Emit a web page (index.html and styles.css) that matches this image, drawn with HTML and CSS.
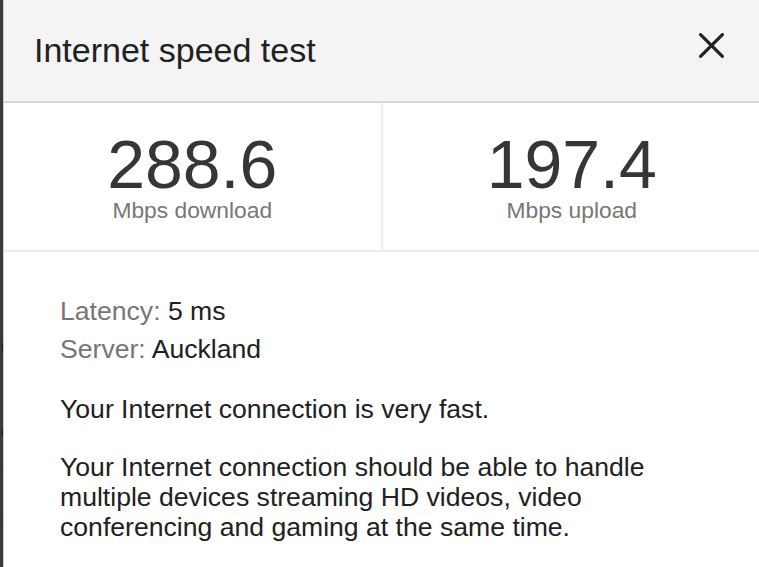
FILE: index.html
```html
<!DOCTYPE html>
<html lang="en">
<head>
<meta charset="utf-8">
<title>Internet speed test</title>
<link rel="stylesheet" href="styles.css">
</head>
<body>
  <div class="backdrop" aria-hidden="true">
    <div class="bg-line bg-1">page text (</div>
    <div class="bg-line bg-2">more text o</div>
    <div class="bg-line bg-3">something e</div>
    <div class="bg-line bg-4">result t</div>
    <div class="bg-line bg-5">options s</div>
  </div>
  <div class="dialog">
    <header class="header">
      <h1 class="title">Internet speed test</h1>
      <button class="close" aria-label="Close">
        <svg viewBox="0 0 25 25" width="25" height="25">
          <line x1="1.6" y1="1.6" x2="23.4" y2="23.4"/>
          <line x1="23.4" y1="1.6" x2="1.6" y2="23.4"/>
        </svg>
      </button>
    </header>
    <section class="stats">
      <div class="stat">
        <div class="stat-value">288.6</div>
        <div class="stat-label">Mbps download</div>
      </div>
      <div class="stat">
        <div class="stat-value">197.4</div>
        <div class="stat-label">Mbps upload</div>
      </div>
    </section>
    <section class="details">
      <div class="info">
        <div class="info-row"><span class="info-label">Latency:</span> 5 ms</div>
        <div class="info-row"><span class="info-label">Server:</span> Auckland</div>
      </div>
      <p class="summary">Your Internet connection is very fast.</p>
      <p class="summary">Your Internet connection should be able to handle multiple devices streaming HD videos, video conferencing and gaming at the same time.</p>
    </section>
  </div>
</body>
</html>
```

FILE: styles.css
```css
* {
  box-sizing: border-box;
}

html, body {
  margin: 0;
  padding: 0;
}

body {
  width: 759px;
  height: 567px;
  overflow: hidden;
  display: flex;
  background: #3b3b3b;
  font-family: "Liberation Sans", Arial, Helvetica, sans-serif;
}

.backdrop {
  flex: none;
  width: 3px;
  overflow: hidden;
  display: flex;
  flex-direction: column;
  align-items: flex-end;
  padding-top: 292px;
  font-size: 26px;
  line-height: 30px;
  color: #1c1c1c;
}

.bg-line {
  white-space: nowrap;
  margin-right: -12px;
}

.bg-2 { margin-top: 8px; }
.bg-3 { margin-top: 56px; }
.bg-4 { margin-top: 14px; margin-right: -6px; }
.bg-5 { margin-top: 12px; margin-right: -11px; }

.dialog {
  flex: none;
  width: 758px;
  height: 567px;
  background: #ffffff;
  border-left: 1px solid #cdcdcd;
  display: flex;
  flex-direction: column;
}

.header {
  height: 103px;
  flex: none;
  display: flex;
  align-items: center;
  justify-content: space-between;
  padding: 0 37px 2px 30px;
  background: #f4f4f4;
  border-bottom: 2px solid #d7d7d7;
}

.title {
  margin: 0;
  font-size: 34px;
  line-height: 40px;
  font-weight: normal;
  color: #212121;
}

.close {
  border: 0;
  padding: 0;
  margin: 0 0 8px 0;
  background: transparent;
  width: 25px;
  height: 25px;
  display: flex;
}

.close svg line {
  stroke: #222222;
  stroke-width: 3.2;
  stroke-linecap: round;
}

.stats {
  flex: none;
  display: grid;
  grid-template-columns: 1fr 1fr;
  border-bottom: 2px solid #ededed;
}

.stat {
  padding: 27px 0 28px;
  text-align: center;
}

.stat:first-child {
  border-right: 2px solid #ededed;
}

.stat-value {
  font-size: 68px;
  line-height: 68px;
  color: #363636;
}

.stat-label {
  font-size: 22.8px;
  line-height: 24px;
  color: #777777;
}

.details {
  padding: 44px 50px 0 56px;
  font-size: 26.6px;
  line-height: 30px;
  color: #212121;
}

.info {
  display: flex;
  flex-direction: column;
  gap: 8px;
}

.info-label {
  color: #767676;
}

.summary {
  margin: 30px 0 0 0;
}

.summary + .summary {
  margin-top: 28px;
}
```
